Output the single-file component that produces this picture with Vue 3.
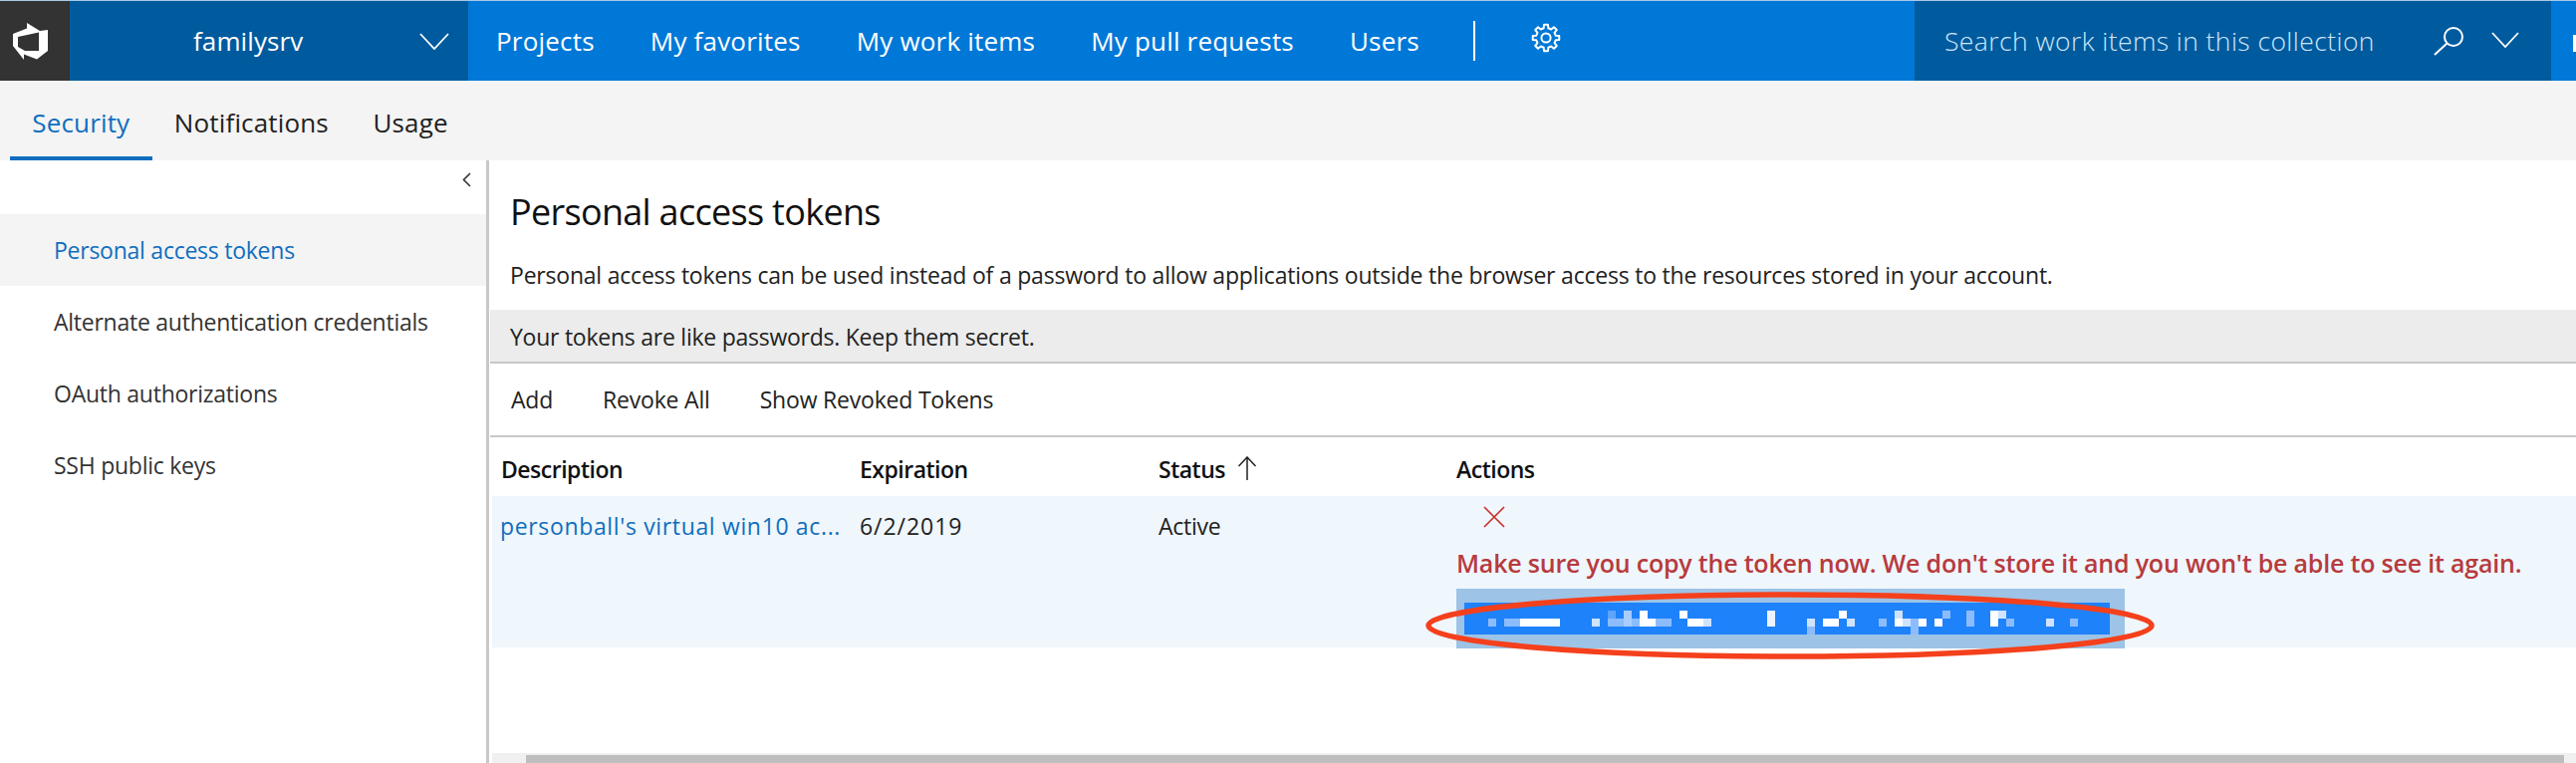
<script setup>
const navItems = ['Projects', 'My favorites', 'My work items', 'My pull requests', 'Users']
const sideItems = ['Personal access tokens', 'Alternate authentication credentials', 'OAuth authorizations', 'SSH public keys']
const tabs = ['Security', 'Notifications', 'Usage']
const W = '#ffffff', L = '#cfe3fd', M = '#8dbcfd', D = '#5fa3fc'
const px = [
  [1494,622,8,8,M],[1510,622,16,8,M],[1526,622,40,8,W],[1598,622,8,8,L],[1614,614,8,8,D],[1614,622,8,8,M],
  [1622,622,8,8,M],[1630,614,8,16,'#a9cdfd'],[1638,622,8,8,M],[1646,614,8,16,W],[1654,622,8,8,W],[1662,622,16,8,M],
  [1686,614,8,8,W],[1694,622,16,8,W],[1710,622,8,8,L],[1774,614,8,16,'#eaf3ff'],[1814,622,8,8,L],[1814,630,8,8,M],
  [1830,622,16,8,W],[1846,614,8,8,W],[1854,622,8,8,L],[1886,622,8,8,M],[1902,614,8,8,L],[1902,622,8,8,W],
  [1910,622,8,8,L],[1918,622,8,8,M],[1918,630,8,8,M],[1926,622,8,8,W],[1942,622,8,8,W],[1950,614,8,8,M],
  [1974,614,8,16,M],[1998,614,8,16,W],[2006,614,8,8,L],[2014,622,8,8,M],[2054,622,8,8,L],[2078,622,8,8,M]
].map(([x, y, w, h, c]) => ({ x: x - 1470, y: y - 606, w, h, c }))

const gearPath = (() => {
  const n = 8, cx = 15, cy = 15, ro = 13.4, ri = 10
  let d = ''
  for (let i = 0; i < n; i++) {
    const a = (i / n) * Math.PI * 2
    const step = Math.PI * 2 / n
    const pts = [
      [ri, a - step * 0.30], [ro, a - step * 0.19], [ro, a + step * 0.19], [ri, a + step * 0.30]
    ]
    pts.forEach(([r, t], j) => {
      const x = (cx + r * Math.sin(t)).toFixed(2)
      const y = (cy - r * Math.cos(t)).toFixed(2)
      d += (i === 0 && j === 0 ? 'M' : 'L') + x + ' ' + y + ' '
    })
  }
  return d + 'Z'
})()
</script>

<template>
  <div class="page">
    <header class="topbar">
      <div class="logo">
        <svg width="60" height="80" viewBox="0 0 60 80">
          <path fill="#fff" fill-rule="evenodd" d="M27 22 L40 30 L48 29 V50 L37 58.5 L24 53.5 V59 L13 45 V33 L27 27.5 Z M18 36 V46 L25 50 H39 V31.5 Z" />
        </svg>
      </div>
      <div class="project">
        <span class="project-name">familysrv</span>
        <svg class="project-chev" width="30" height="17" viewBox="0 0 30 17"><path d="M1 1 L15 16 L29 1" fill="none" stroke="#fff" stroke-width="1.8" /></svg>
      </div>
      <nav class="nav">
        <a v-for="n in navItems" :key="n" class="nav-item">{{ n }}</a>
        <span class="sep"></span>
        <svg class="gear" width="30" height="30" viewBox="0 0 30 30">
          <path :d="gearPath" fill="none" stroke="#fff" stroke-width="2" stroke-linejoin="round" />
          <circle cx="15" cy="15" r="4.6" fill="none" stroke="#fff" stroke-width="2" />
        </svg>
      </nav>
      <div class="search">
        <span class="search-text">Search work items in this collection</span>
        <svg class="search-icon" width="36" height="30" viewBox="0 0 36 30">
          <circle cx="24" cy="11" r="9" fill="none" stroke="#fff" stroke-width="2" />
          <path d="M17.5 17.5 L5 29" fill="none" stroke="#fff" stroke-width="2" />
        </svg>
        <svg class="search-chev" width="28" height="16" viewBox="0 0 28 16"><path d="M1 1 L14 15 L27 1" fill="none" stroke="#fff" stroke-width="1.8" /></svg>
      </div>
      <div class="edge"><span class="edge-mark"></span></div>
    </header>

    <div class="tabs">
      <a v-for="(t, i) in tabs" :key="t" class="tab" :class="{ active: i === 0 }">{{ t }}</a>
    </div>

    <div class="body">
      <aside class="side">
        <div class="collapse">
          <svg width="9" height="15" viewBox="0 0 9 15"><path d="M8 1 L1.5 7.5 L8 14" fill="none" stroke="#333" stroke-width="1.6" /></svg>
        </div>
        <a v-for="(s, i) in sideItems" :key="s" class="side-item" :class="{ selected: i === 0 }">{{ s }}</a>
      </aside>

      <main class="main">
        <h1 class="title">Personal access tokens</h1>
        <p class="desc">Personal access tokens can be used instead of a password to allow applications outside the browser access to the resources stored in your account.</p>
        <div class="banner">Your tokens are like passwords. Keep them secret.</div>
        <div class="toolbar">
          <a class="tool">Add</a>
          <a class="tool">Revoke All</a>
          <a class="tool">Show Revoked Tokens</a>
        </div>
        <div class="table">
          <div class="thead">
            <span class="th">Description</span>
            <span class="th">Expiration</span>
            <span class="th">Status
              <svg class="sort" width="20" height="24" viewBox="0 0 20 24"><path d="M10 24 V1 M1.5 10 L10 1 L18.5 10" fill="none" stroke="#222" stroke-width="1.5" /></svg>
            </span>
            <span class="th">Actions</span>
          </div>
          <div class="trow">
            <a class="td link">personball's virtual win10 ac...</a>
            <span class="td date">6/2/2019</span>
            <span class="td">Active</span>
            <div class="actions">
              <svg class="close" width="22" height="22" viewBox="0 0 22 22"><path d="M1 1 L21 21 M21 1 L1 21" fill="none" stroke="#c8302c" stroke-width="1.7" /></svg>
              <div class="warn">Make sure you copy the token now. We don't store it and you won't be able to see it again.</div>
              <div class="token">
                <svg class="token-strip" width="648" height="32" viewBox="0 0 648 32">
                  <rect width="648" height="32" fill="#1e82fb" />
                  <rect v-for="(p, i) in px" :key="i" :x="p.x" :y="p.y" :width="p.w" :height="p.h" :fill="p.c" />
                </svg>
                <svg class="oval" width="740" height="76" viewBox="0 0 740 76">
                  <ellipse cx="370" cy="38" rx="363" ry="31" fill="none" stroke="#f4401c" stroke-width="5.5" />
                </svg>
              </div>
            </div>
          </div>
        </div>
        <div class="hscroll"><div class="thumb"></div></div>
      </main>
    </div>
  </div>
</template>

<style>
html, body { margin: 0; background: #fff; overflow: hidden; }
</style>

<style scoped>
.page {
  width: 2586px;
  height: 766px;
  overflow: hidden;
  display: flex;
  flex-direction: column;
  padding-top: 1px;
  box-sizing: border-box;
  background: #a8c8e8;
  font-family: "Open Sans", "Liberation Sans", sans-serif;
  font-size: 23px;
  letter-spacing: -0.25px;
  color: #222;
}
.topbar { display: flex; height: 80px; flex: none; background: #0078d7; color: #fff; }
.logo { width: 70px; background: #333; flex: none; display: flex; }
.project { width: 400px; flex: none; background: #005a9e; display: flex; align-items: center; position: relative; }
.project-name { margin-left: 124px; font-size: 26px; letter-spacing: 0.1px; }
.project-chev { position: absolute; left: 351px; top: 32px; }
.nav { flex: 1; display: flex; align-items: center; padding-left: 28px; gap: 56px; font-size: 26px; letter-spacing: 0.2px; min-width: 0; }
.nav-item { white-space: nowrap; }
.sep { width: 2px; height: 40px; background: #fff; margin-left: -2px; }
.gear { margin-top: -6px; }
.search { width: 639px; flex: none; background: #005a9e; display: flex; align-items: center; position: relative; }
.search-text { margin-left: 30px; font-size: 26.5px; letter-spacing: 0.42px; font-weight: 300; color: #cfe6f8; white-space: nowrap; }
.search-icon { position: absolute; left: 517px; top: 25px; }
.search-chev { position: absolute; left: 579px; top: 31px; }
.edge { width: 25px; flex: none; position: relative; }
.edge-mark { position: absolute; right: 0; top: 34px; width: 3px; height: 17px; background: #fff; }

.tabs { height: 80px; flex: none; background: #f4f4f4; display: flex; padding-left: 10px; box-sizing: border-box; }
.tab { padding: 0 22.3px; line-height: 84px; height: 80px; box-sizing: border-box; font-size: 26px; letter-spacing: 0.15px; color: #222; }
.tab.active { color: #106ebe; border-bottom: 4px solid #106ebe; }

.body { flex: 1; display: flex; background: #fff; min-height: 0; }
.side { width: 488px; flex: none; display: flex; flex-direction: column; }
.collapse { height: 54px; display: flex; justify-content: flex-end; padding: 12px 15px 0 0; box-sizing: border-box; }
.side-item { height: 72px; line-height: 73px; padding-left: 54px; color: #333; white-space: nowrap; }
.side-item.selected { background: #f4f4f4; color: #106ebe; }

.main { flex: 1; min-width: 0; border-left: 3px solid #c8c8c8; display: flex; flex-direction: column; }
.title { margin: 0; height: 105px; box-sizing: border-box; padding: 27px 0 0 21px; font-size: 36px; letter-spacing: -0.7px; line-height: 50px; font-weight: 400; color: #111; white-space: nowrap; }
.desc { margin: -1px 0 0; height: 46px; padding-left: 21px; line-height: 22px; font-size: 23px; letter-spacing: -0.21px; color: #222; white-space: nowrap; }
.banner { height: 52px; margin-left: 1px; padding-left: 20px; background: #ececec; line-height: 54px; border-bottom: 2px solid #c8c8c8; flex: none; white-space: nowrap; }
.toolbar { height: 72px; flex: none; margin-left: 1px; padding-left: 21px; display: flex; align-items: center; gap: 50px; letter-spacing: -0.2px; border-bottom: 2px solid #c8c8c8; }
.table { flex: 1; margin-left: 3px; min-height: 0; }
.thead, .trow { display: grid; grid-template-columns: 360px 300px 299px 1fr; padding-left: 9px; }
.thead { height: 59px; align-items: center; padding-top: 5px; box-sizing: border-box; }
.th { font-weight: 600; letter-spacing: -0.5px; color: #111; white-space: nowrap; display: flex; align-items: center; gap: 12px; }
.sort { margin-top: -2px; }
.trow { height: 152px; background: #eff6fc; }
.td { padding-top: 14px; line-height: 32px; white-space: nowrap; }
.link { color: #106ebe; letter-spacing: 0.65px; margin-left: -1px; }
.date { letter-spacing: 0.95px; }
.actions { position: relative; }
.close { display: block; margin: 10px 0 0 27px; }
.warn { margin-top: 19px; line-height: 32px; font-size: 25px; letter-spacing: -0.2px; font-weight: 600; color: #b83a3d; white-space: nowrap; }
.token { position: relative; margin-top: 10px; width: 671px; height: 60px; box-sizing: border-box; padding: 14px 0 0 8px; background: #9dc3e6; }
.token-strip { display: block; }
.oval { position: absolute; left: -35px; top: -1px; overflow: visible; }
.hscroll { height: 10px; flex: none; margin-left: 3px; background: #f0f0f0; padding: 2px 12px 0 34px; box-sizing: border-box; }
.thumb { height: 8px; background: #bebebe; }
</style>
